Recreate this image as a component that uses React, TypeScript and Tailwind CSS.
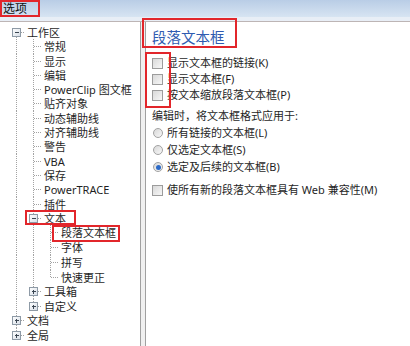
import React from "react"

type Row = {
  label: string
  level: number
  h: number
  exp?: "-" | "+"
  first?: boolean
  last?: boolean
}

const rows: Row[] = [
  { label: "工作区", level: 0, h: 14, exp: "-", first: true },
  { label: "常规", level: 1, h: 15 },
  { label: "显示", level: 1, h: 14 },
  { label: "编辑", level: 1, h: 14 },
  { label: "PowerClip 图文框", level: 1, h: 14 },
  { label: "贴齐对象", level: 1, h: 15 },
  { label: "动态辅助线", level: 1, h: 14 },
  { label: "对齐辅助线", level: 1, h: 14 },
  { label: "警告", level: 1, h: 15 },
  { label: "VBA", level: 1, h: 14 },
  { label: "保存", level: 1, h: 14 },
  { label: "PowerTRACE", level: 1, h: 15 },
  { label: "插件", level: 1, h: 14 },
  { label: "文本", level: 1, h: 14, exp: "-" },
  { label: "段落文本框", level: 2, h: 15 },
  { label: "字体", level: 2, h: 15 },
  { label: "拼写", level: 2, h: 15 },
  { label: "快速更正", level: 2, h: 14, last: true },
  { label: "工具箱", level: 1, h: 15, exp: "+" },
  { label: "自定义", level: 1, h: 14, exp: "+", last: true },
  { label: "文档", level: 0, h: 15, exp: "+" },
  { label: "全局", level: 0, h: 14, exp: "+", last: true },
]

const dot = "#a3a3a3"

// one 17px column of tree connector lines
function Guide({ h, top, bottom, stub, exp }: { h: number; top?: boolean; bottom?: boolean; stub?: boolean; exp?: "-" | "+" }) {
  const mid = Math.floor(h / 2) + 0.5
  return (
    <svg width="17" height={h} className="shrink-0" shapeRendering="crispEdges">
      {top && <line x1="8.5" y1="0" x2="8.5" y2={mid} stroke={dot} strokeDasharray="1 1" />}
      {bottom && <line x1="8.5" y1={mid} x2="8.5" y2={h} stroke={dot} strokeDasharray="1 1" />}
      {stub && <line x1="8.5" y1={mid} x2="17" y2={mid} stroke={dot} strokeDasharray="1 1" />}
      {exp && (
        <g>
          <defs>
            <linearGradient id="expg" x1="0" y1="0" x2="1" y2="1">
              <stop offset="0" stopColor="#ffffff" />
              <stop offset="1" stopColor="#d6dde6" />
            </linearGradient>
          </defs>
          <rect x="4.5" y={mid - 4} width="8" height="8" fill="url(#expg)" stroke="#8e9aa6" />
          <line x1="6.5" y1={mid} x2="11" y2={mid} stroke="#3b4652" />
          {exp === "+" && <line x1="8.5" y1={mid - 2} x2="8.5" y2={mid + 2.5} stroke="#3b4652" />}
        </g>
      )}
    </svg>
  )
}

function TreeRow({ row }: { row: Row }) {
  const anc = Array.from({ length: row.level })
  return (
    <div className="flex items-center" style={{ height: row.h }}>
      {anc.map((_, i) => (
        <Guide key={i} h={row.h} top bottom />
      ))}
      <Guide h={row.h} top={!row.first} bottom={!row.last} stub exp={row.exp} />
      <span className="ml-[2px] whitespace-nowrap text-[11px] leading-none text-[#1f1f1f]">{row.label}</span>
    </div>
  )
}

function CheckBox() {
  return (
    <span className="block h-[11px] w-[11px] shrink-0 border border-[#9c9c9c] bg-linear-to-br from-[#d9d9d9] to-[#f7f7f7]" />
  )
}

function Radio({ on }: { on?: boolean }) {
  return (
    <span className="ml-[1px] flex h-[10px] w-[10px] shrink-0 items-center justify-center rounded-full border border-[#a2a2a2] bg-linear-to-br from-[#d8d8d8] to-[#f8f8f8]">
      {on && <span className="block h-[5px] w-[5px] rounded-full bg-[#2c6ac7]" />}
    </span>
  )
}

export default function App() {
  return (
    <div className="relative h-[346px] w-[410px] overflow-hidden bg-white font-['Noto_Sans','Noto_Sans_CJK_SC',sans-serif]">
      {/* Title bar */}
      <div className="flex h-[17px] items-center bg-linear-to-b from-[#b9cde6] to-[#d7e4f2] pl-[3px] text-[12px] text-[#111]">
        选项
      </div>
      <div className="h-[4px] bg-[#e8eef6]" />
      <div className="h-px bg-[#bdb5b5]" />

      <div className="flex h-[324px] bg-[#f0f0f0]">
        {/* Tree */}
        <div className="w-[141px] border-r border-[#a0a0a0] bg-white pl-[8px] pt-[3px]">
          {rows.map((r) => (
            <TreeRow key={r.label} row={r} />
          ))}
        </div>

        {/* Page */}
        <div className="ml-[4px] flex flex-1 flex-col border-l border-[#a0a0a0] bg-white pl-[6px] text-[11px] text-[#1f1f1f]">
          <div className="mt-[7px] h-[17px] text-[14.5px] leading-[17px] text-[#2f5bb0]">段落文本框</div>
          <div className="mt-[9.5px] flex flex-col">
            {["显示文本框的链接(K)", "显示文本框(F)", "按文本缩放段落文本框(P)"].map((t) => (
              <div key={t} className="flex h-[16px] items-center gap-[4px]">
                <CheckBox />
                <span>{t}</span>
              </div>
            ))}
          </div>
          <div className="mt-[4.5px] flex h-[16px] items-center">编辑时，将文本框格式应用于:</div>
          <div className="mt-[0.5px] flex flex-col">
            {["所有链接的文本框(L)", "仅选定文本框(S)", "选定及后续的文本框(B)"].map((t, i) => (
              <div key={t} className="flex h-[17px] items-center gap-[4px]">
                <Radio on={i === 2} />
                <span>{t}</span>
              </div>
            ))}
          </div>
          <div className="mt-[7px] flex h-[16px] items-center gap-[4px]">
            <CheckBox />
            <span>使所有新的段落文本框具有 Web 兼容性(M)</span>
          </div>
        </div>
      </div>

      {/* Red highlight annotations */}
      <div className="absolute left-0 top-0 h-[17px] w-[40px] border-2 border-[#e2262b]" />
      <div className="absolute left-[142px] top-[18px] h-[30px] w-[95px] border-2 border-[#e2262b]" />
      <div className="absolute left-[145px] top-[52px] h-[56px] w-[26px] border-2 border-[#e2262b]" />
      <div className="absolute left-[25px] top-[210px] h-[15px] w-[51px] border-2 border-[#e2262b]" />
      <div className="absolute left-[52px] top-[225px] h-[17px] w-[68px] border-2 border-[#e2262b]" />
    </div>
  )
}
